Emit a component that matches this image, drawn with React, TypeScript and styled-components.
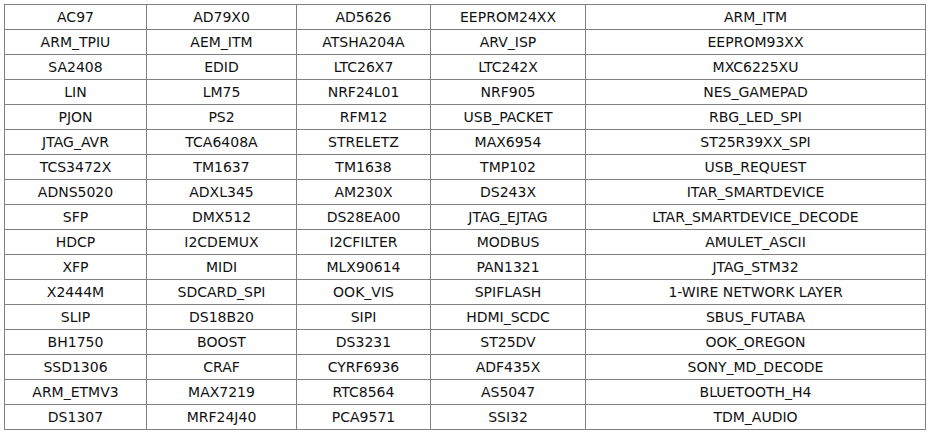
import React from 'react';
import styled, { createGlobalStyle } from 'styled-components';

const GlobalStyle = createGlobalStyle`
  html, body {
    margin: 0;
    padding: 0;
    background: #ffffff;
  }
`;

const Page = styled.div`
  padding: 4px 0 0 4px;
`;

const Table = styled.table`
  border-collapse: collapse;
  table-layout: fixed;
  width: 921px;
  font-family: "DejaVu Sans", Verdana, sans-serif;
  font-size: 14px;
  color: #111111;
`;

const Cell = styled.td`
  border: 1px solid #808080;
  height: 24px;
  padding: 0;
  text-align: center;
  vertical-align: middle;
  white-space: nowrap;
  line-height: 16px;
`;

const colWidths = [142, 150, 134, 155, 340];

const rows: string[][] = [
  ['AC97', 'AD79X0', 'AD5626', 'EEPROM24XX', 'ARM_ITM'],
  ['ARM_TPIU', 'AEM_ITM', 'ATSHA204A', 'ARV_ISP', 'EEPROM93XX'],
  ['SA2408', 'EDID', 'LTC26X7', 'LTC242X', 'MXC6225XU'],
  ['LIN', 'LM75', 'NRF24L01', 'NRF905', 'NES_GAMEPAD'],
  ['PJON', 'PS2', 'RFM12', 'USB_PACKET', 'RBG_LED_SPI'],
  ['JTAG_AVR', 'TCA6408A', 'STRELETZ', 'MAX6954', 'ST25R39XX_SPI'],
  ['TCS3472X', 'TM1637', 'TM1638', 'TMP102', 'USB_REQUEST'],
  ['ADNS5020', 'ADXL345', 'AM230X', 'DS243X', 'ITAR_SMARTDEVICE'],
  ['SFP', 'DMX512', 'DS28EA00', 'JTAG_EJTAG', 'LTAR_SMARTDEVICE_DECODE'],
  ['HDCP', 'I2CDEMUX', 'I2CFILTER', 'MODBUS', 'AMULET_ASCII'],
  ['XFP', 'MIDI', 'MLX90614', 'PAN1321', 'JTAG_STM32'],
  ['X2444M', 'SDCARD_SPI', 'OOK_VIS', 'SPIFLASH', '1-WIRE NETWORK LAYER'],
  ['SLIP', 'DS18B20', 'SIPI', 'HDMI_SCDC', 'SBUS_FUTABA'],
  ['BH1750', 'BOOST', 'DS3231', 'ST25DV', 'OOK_OREGON'],
  ['SSD1306', 'CRAF', 'CYRF6936', 'ADF435X', 'SONY_MD_DECODE'],
  ['ARM_ETMV3', 'MAX7219', 'RTC8564', 'AS5047', 'BLUETOOTH_H4'],
  ['DS1307', 'MRF24J40', 'PCA9571', 'SSI32', 'TDM_AUDIO'],
];

export default function App() {
  return (
    <>
      <GlobalStyle />
      <Page>
        <Table>
          <colgroup>
            {colWidths.map((w, i) => (
              <col key={i} style={{ width: w }} />
            ))}
          </colgroup>
          <tbody>
            {rows.map((row, r) => (
              <tr key={r}>
                {row.map((name, c) => (
                  <Cell key={c}>{name}</Cell>
                ))}
              </tr>
            ))}
          </tbody>
        </Table>
      </Page>
    </>
  );
}
